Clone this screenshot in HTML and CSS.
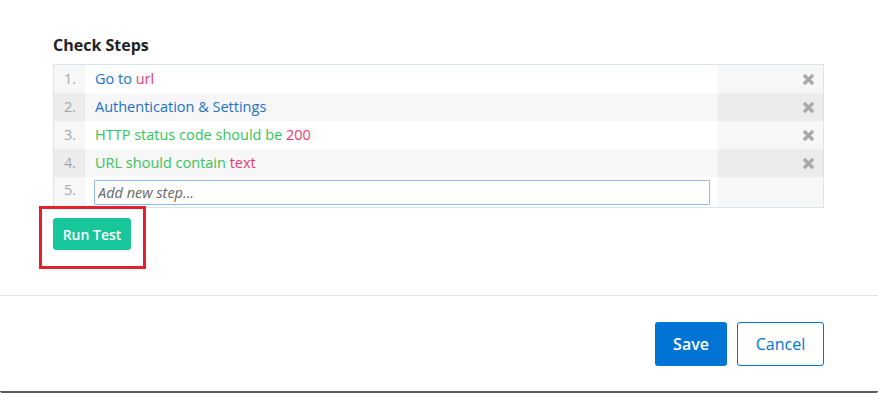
FILE: index.html
```html
<!DOCTYPE html>
<html lang="en">
  <head>
    <meta charset="UTF-8" />
    <title>Check Steps</title>
    <link rel="stylesheet" href="styles.css">
  </head>
  <body>
    <div class="modal">
      <div class="modal-body">
        <h2 class="title">Check Steps</h2>

        <div class="steps">
          <div class="step">
            <div class="step-num">1.</div>
            <div class="step-text"><span class="blue">Go to</span> <span class="pink">url</span></div>
            <div class="step-action"><svg class="x" viewBox="0 0 10 10"><path d="M1.5 1.5 8.5 8.5M8.5 1.5 1.5 8.5" /></svg></div>
          </div>
          <div class="step">
            <div class="step-num">2.</div>
            <div class="step-text"><span class="blue">Authentication &amp; Settings</span></div>
            <div class="step-action"><svg class="x" viewBox="0 0 10 10"><path d="M1.5 1.5 8.5 8.5M8.5 1.5 1.5 8.5" /></svg></div>
          </div>
          <div class="step">
            <div class="step-num">3.</div>
            <div class="step-text"><span class="green">HTTP status code should be</span> <span class="pink">200</span></div>
            <div class="step-action"><svg class="x" viewBox="0 0 10 10"><path d="M1.5 1.5 8.5 8.5M8.5 1.5 1.5 8.5" /></svg></div>
          </div>
          <div class="step">
            <div class="step-num">4.</div>
            <div class="step-text"><span class="green">URL should contain</span> <span class="pink">text</span></div>
            <div class="step-action"><svg class="x" viewBox="0 0 10 10"><path d="M1.5 1.5 8.5 8.5M8.5 1.5 1.5 8.5" /></svg></div>
          </div>
          <div class="step step-new">
            <div class="step-num">5.</div>
            <div class="step-input"><input class="new-step" type="text" placeholder="Add new step..." /></div>
            <div class="step-action"></div>
          </div>
        </div>

        <div class="highlight">
          <button class="run-btn">Run Test</button>
        </div>
      </div>

      <div class="modal-footer">
        <button class="save-btn">Save</button>
        <button class="cancel-btn">Cancel</button>
      </div>
    </div>
  </body>
</html>
```

FILE: styles.css
```css
:root {
  --blue: #1a72cf;
  --pink: #ea3a73;
  --green: #34c45c;
  --teal: #17c69b;
  --primary: #0074d4;
  --gray: #a6a6a6;
  --border: #dde3ea;
}

* {
  margin: 0;
  padding: 0;
  box-sizing: border-box;
  font-family: "Open Sans", "Liberation Sans", sans-serif;
}

body {
  background: #fff;
}

.modal {
  width: 878px;
  height: 393px;
  background: #fff;
  border-bottom: 2px solid #5a5a5a;
  border-radius: 0 0 2px 2px;
  display: flex;
  flex-direction: column;
}

.modal-body {
  padding: 35px 54px 0 53px;
  height: 295px;
}

.title {
  font-size: 16px;
  font-weight: 700;
  color: #222;
  line-height: 20px;
  margin-bottom: 9px;
}

.steps {
  border: 1px solid var(--border);
}

.step {
  display: grid;
  grid-template-columns: 31px 1fr 105px;
  height: 28px;
  background: #fff;
}

.step:nth-child(even) {
  background: #f7f7f7;
}

.step-num {
  background: #f7f7f7;
  color: var(--gray);
  font-size: 14.5px;
  line-height: 28px;
  text-align: right;
  padding-right: 9px;
}

.step:nth-child(even) .step-num,
.step:nth-child(even) .step-action {
  background: #ececec;
}

.step-text {
  font-size: 14.5px;
  line-height: 28px;
  padding-left: 10px;
  white-space: nowrap;
}

.step-action {
  background: #f7f7f7;
  display: flex;
  align-items: center;
  justify-content: flex-end;
  padding-right: 8px;
}

.x {
  width: 13px;
  height: 13px;
  stroke: #a9a9a9;
  stroke-width: 2.6;
  fill: none;
}

.blue {
  color: var(--blue);
}

.pink {
  color: var(--pink);
}

.green {
  color: var(--green);
}

.step-new {
  height: 30px;
}

.step-new .step-num {
  line-height: 26px;
}

.step-input {
  padding: 3px 8px 0 9px;
}

.new-step {
  display: block;
  width: 100%;
  height: 25px;
  border: 1px solid #93b9f2;
  border-radius: 1px;
  padding: 0 3px;
  font-size: 14.5px;
  font-style: italic;
  color: #555;
  outline: none;
}

.new-step::placeholder {
  color: #666;
  font-style: italic;
}

.highlight {
  display: inline-block;
  margin: -2px 0 0 -14px;
  border: 3px solid #e8202e;
  padding: 9px 12px 16px 11px;
}

button {
  border: none;
  cursor: pointer;
  font-weight: 600;
}

.run-btn {
  background: var(--teal);
  color: #fff;
  font-size: 14px;
  width: 78px;
  height: 32px;
  border-radius: 3px;
  display: block;
}

.modal-footer {
  border-top: 1px solid #e5e5e5;
  flex: 1;
  display: flex;
  justify-content: flex-end;
  align-items: flex-start;
  gap: 10px;
  padding: 26px 54px 0 0;
}

.save-btn {
  background: var(--primary);
  color: #fff;
  font-size: 16px;
  width: 72px;
  height: 44px;
  border-radius: 3px;
}

.cancel-btn {
  background: #fff;
  color: var(--primary);
  border: 1px solid var(--primary);
  font-size: 16px;
  font-weight: 400;
  width: 87px;
  height: 44px;
  border-radius: 3px;
}
```
